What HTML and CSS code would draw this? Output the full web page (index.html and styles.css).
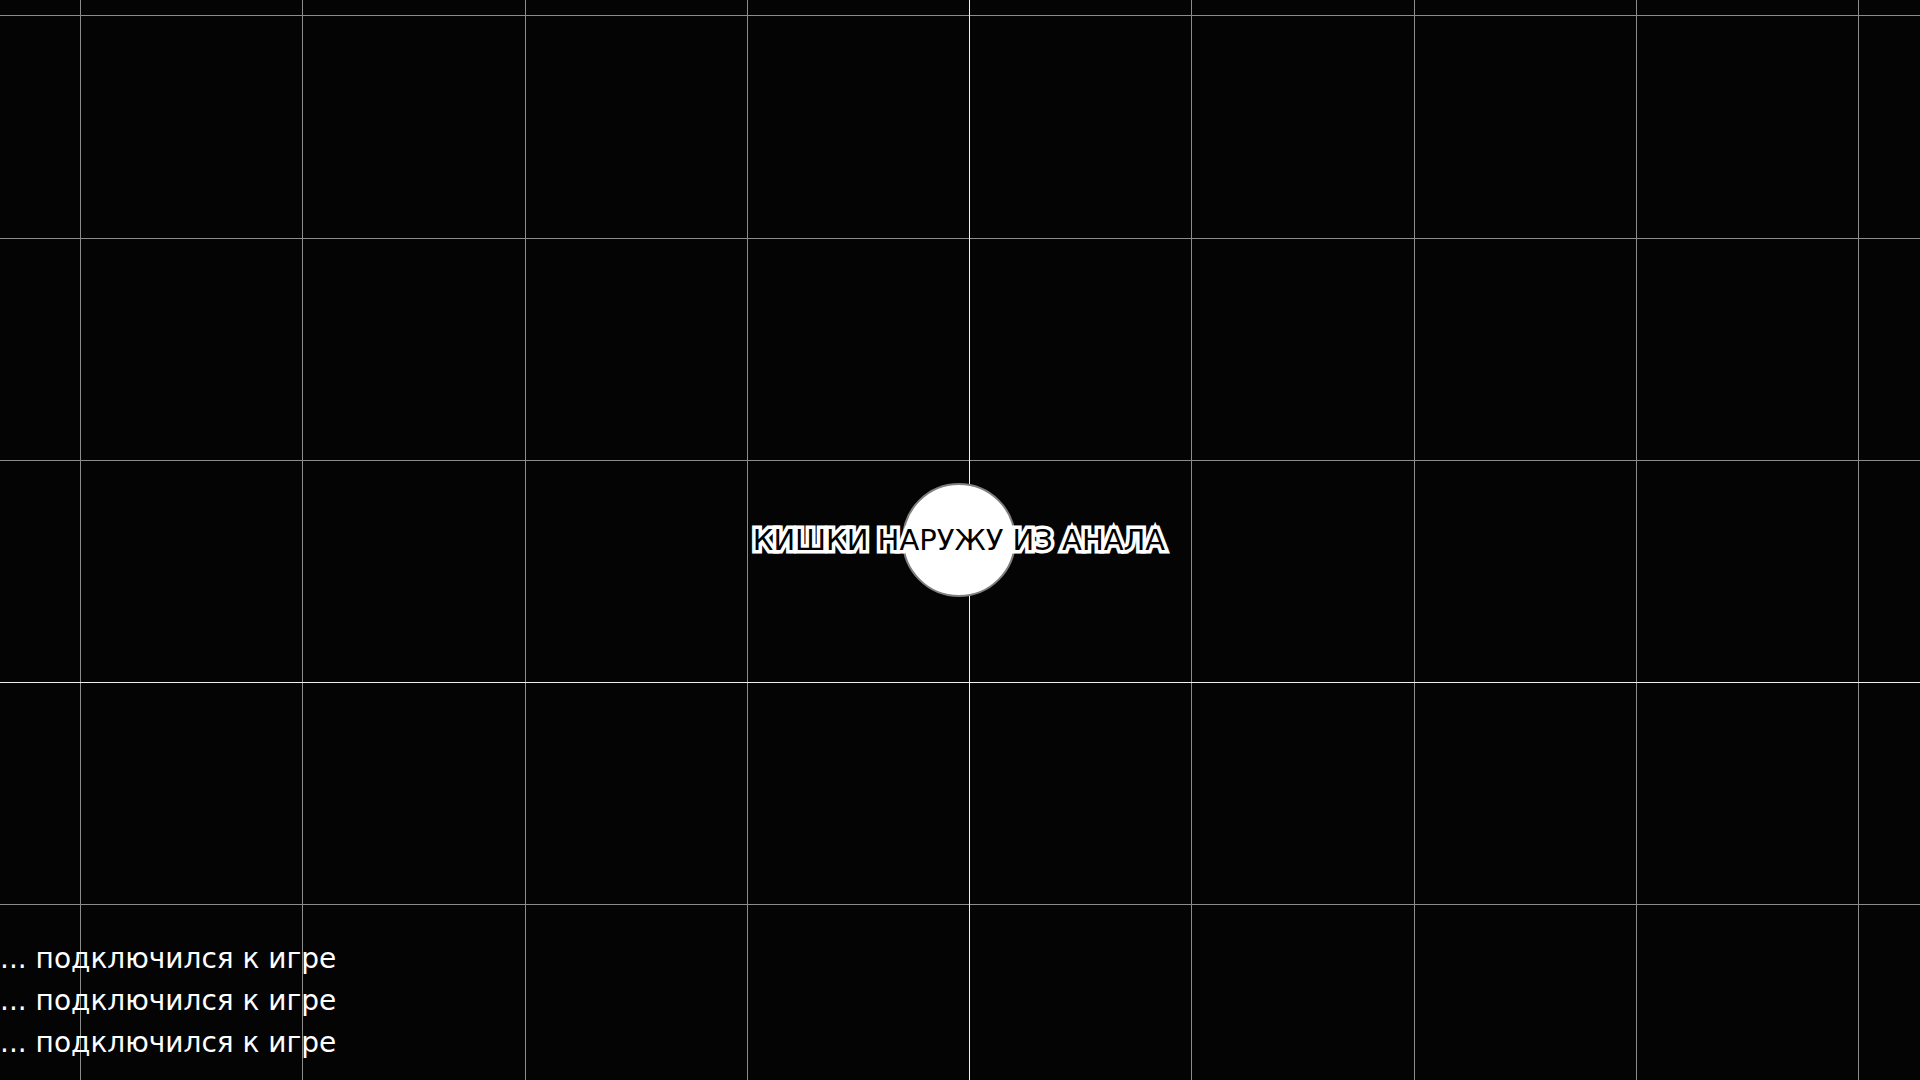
FILE: index.html
```html
<!DOCTYPE html>
<html lang="ru">
<head>
<meta charset="utf-8">
<title>game</title>
<link rel="stylesheet" href="styles.css">
</head>
<body>
<main class="world">
  <svg class="grid" width="1920" height="1080" viewBox="0 0 1920 1080" xmlns="http://www.w3.org/2000/svg" shape-rendering="crispEdges">
    <g stroke="#8c8c8c" stroke-width="1">
      <line x1="80.5" y1="0" x2="80.5" y2="1080"/>
      <line x1="302.5" y1="0" x2="302.5" y2="1080"/>
      <line x1="525.5" y1="0" x2="525.5" y2="1080"/>
      <line x1="747.5" y1="0" x2="747.5" y2="1080"/>
      <line x1="1191.5" y1="0" x2="1191.5" y2="1080"/>
      <line x1="1414.5" y1="0" x2="1414.5" y2="1080"/>
      <line x1="1636.5" y1="0" x2="1636.5" y2="1080"/>
      <line x1="1858.5" y1="0" x2="1858.5" y2="1080"/>
      <line x1="0" y1="15.5" x2="1920" y2="15.5"/>
      <line x1="0" y1="238.5" x2="1920" y2="238.5"/>
      <line x1="0" y1="460.5" x2="1920" y2="460.5"/>
      <line x1="0" y1="904.5" x2="1920" y2="904.5"/>
    </g>
    <g stroke="#f0f0f0" stroke-width="1">
      <line x1="969.5" y1="0" x2="969.5" y2="1080"/>
      <line x1="0" y1="682.5" x2="1920" y2="682.5"/>
    </g>
  </svg>

  <div class="player">
    <div class="cell"></div>
    <span class="nick">КИШКИ НАРУЖУ ИЗ АНАЛА</span>
  </div>

  <ul class="chat">
    <li>... подключился к игре</li>
    <li>... подключился к игре</li>
    <li>... подключился к игре</li>
  </ul>
</main>
</body>
</html>
```

FILE: styles.css
```css
html, body {
  margin: 0;
  padding: 0;
  width: 1920px;
  height: 1080px;
  overflow: hidden;
  background: #040404;
}

.world {
  position: relative;
  width: 1920px;
  height: 1080px;
  background: #040404;
  font-family: "DejaVu Sans", "Noto Sans", sans-serif;
}

.grid {
  position: absolute;
  left: 0;
  top: 0;
  display: block;
}

.player {
  position: absolute;
  left: 959px;
  top: 540px;
  width: 0;
  height: 0;
  display: flex;
  align-items: center;
  justify-content: center;
}

.cell {
  position: absolute;
  left: -57px;
  top: -57px;
  width: 110px;
  height: 110px;
  border-radius: 50%;
  background: #ffffff;
  border: 2px solid #7f7f7f;
}

.nick {
  position: relative;
  white-space: nowrap;
  font-size: 29px;
  line-height: 1;
  color: #000;
  -webkit-text-stroke: 7px #fff;
  paint-order: stroke fill;
  letter-spacing: 0;
}

.chat {
  position: absolute;
  left: 0;
  bottom: 16px;
  margin: 0;
  padding: 0;
  list-style: none;
  color: #fff;
  font-size: 28px;
  line-height: 42px;
}
```
